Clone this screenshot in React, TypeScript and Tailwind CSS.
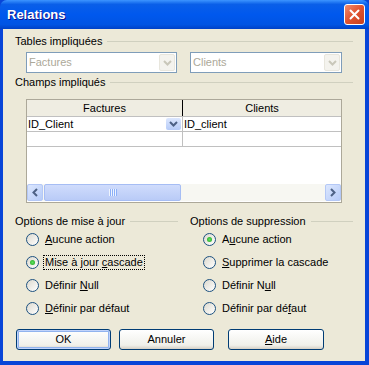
import React from "react";

const font = "font-['Liberation_Sans',Arial,sans-serif]";

function Chevron({ color, className }: { color: string; className?: string }) {
  return (
    <svg width="9" height="6" viewBox="0 0 9 6" className={className}>
      <path d="M1 1 L4.5 4.5 L8 1" fill="none" stroke={color} strokeWidth="2" />
    </svg>
  );
}

function GroupHeader({ title }: { title: string }) {
  return (
    <div className="flex h-[14px] items-center gap-[5px]">
      <span className="whitespace-nowrap leading-none">{title}</span>
      <div className="h-px flex-1 bg-[#D0D0BF]" />
    </div>
  );
}

function Combo({ value, width }: { value: string; width: string }) {
  return (
    <div className={`flex h-[21px] ${width} items-center border border-[#7F9DB9] bg-white pl-[2px] pr-px`}>
      <span className="flex-1 text-[#ACA899]">{value}</span>
      <div className="flex h-[17px] w-[16px] items-center justify-center rounded-[2px] border border-[#E8E6DD] bg-[#F4F3EE]">
        <Chevron color="#C9C7BA" />
      </div>
    </div>
  );
}

function Radio({ label, checked, focused }: { label: React.ReactNode; checked?: boolean; focused?: boolean }) {
  return (
    <div className="flex h-[23px] items-center gap-[4px]">
      <div className="flex h-[13px] w-[13px] items-center justify-center rounded-full border border-[#1C5180] bg-[linear-gradient(135deg,#DCD9CE,#FFFFFF)]">
        {checked && <div className="h-[5px] w-[5px] rounded-full bg-[radial-gradient(circle,#5EE35E,#21A121)]" />}
      </div>
      <span className={`whitespace-nowrap leading-[13px] ${focused ? "border border-dotted border-black px-px" : "border border-transparent px-px"}`}>
        {label}
      </span>
    </div>
  );
}

function Btn({ children, width, focused }: { children: React.ReactNode; width: string; focused?: boolean }) {
  return (
    <div
      className={`flex h-[21px] ${width} items-center justify-center rounded-[3px] border border-[#003C74] bg-[linear-gradient(#FFFFFF,#F0F0EA_80%,#D6D0C5)] ${
        focused ? "shadow-[inset_0_0_0_1px_#C1D3FB,inset_0_0_0_2px_#91B3EE]" : ""
      }`}
    >
      {children}
    </div>
  );
}

function ScrollBtn({ dir }: { dir: "left" | "right" }) {
  return (
    <div className="flex h-[17px] w-[16px] items-center justify-center rounded-[2px] border border-[#B4C8F6] bg-[linear-gradient(135deg,#DCE7FE,#B6CBF8)]">
      <svg width="6" height="9" viewBox="0 0 6 9">
        <path d={dir === "left" ? "M5 1 L1.5 4.5 L5 8" : "M1 1 L4.5 4.5 L1 8"} fill="none" stroke="#4D6185" strokeWidth="2" />
      </svg>
    </div>
  );
}

export default function App() {
  return (
    <div className={`${font} flex h-[365px] w-[369px] flex-col bg-[#0845D8] text-[11px] text-black`}>
      <div className="flex h-[29px] items-center justify-between rounded-t-[7px] bg-[linear-gradient(#3D95FF,#0A5FE8_15%,#0058EE_50%,#0054E3_85%,#0041C6)] pl-[7px] pr-[4px]">
        <span className="text-[13px] font-bold text-white [text-shadow:1px_1px_#0F1089]">Relations</span>
        <div className="flex h-[21px] w-[21px] items-center justify-center rounded-[3px] border border-white bg-[linear-gradient(135deg,#F08C6F,#E0522F_50%,#C8401E)]">
          <svg width="11" height="11" viewBox="0 0 11 11">
            <path d="M1.5 1.5 L9.5 9.5 M9.5 1.5 L1.5 9.5" stroke="white" strokeWidth="2" strokeLinecap="round" />
          </svg>
        </div>
      </div>

      <div className="mb-[4px] ml-[3px] mr-[4px] flex-1 bg-[#ECE9D8] px-[12px] pt-[5px]">
        <GroupHeader title="Tables impliquées" />
        <div className="ml-[11px] mt-[4px] flex gap-[13px]">
          <Combo value="Factures" width="w-[151px]" />
          <Combo value="Clients" width="w-[152px]" />
        </div>

        <div className="mt-[2px]">
          <GroupHeader title="Champs impliqués" />
        </div>

        <div className="ml-[11px] mt-[10px] flex h-[104px] w-[316px] flex-col border border-[#ACA899] bg-white">
          <div className="flex h-[17px] border-b border-[#C0C0C0] bg-[#EFEDE2]">
            <div className="flex w-[156px] items-center justify-center border-r border-black">Factures</div>
            <div className="flex flex-1 items-center justify-center">Clients</div>
          </div>
          <div className="flex h-[15px] border-b border-[#C0C0C0]">
            <div className="flex w-[156px] items-center justify-between border-r border-[#C0C0C0] pl-px pr-px">
              <span>ID_Client</span>
              <div className="flex h-[12px] w-[15px] items-center justify-center rounded-[2px] bg-[linear-gradient(#DCE7FE,#B6CBF8)]">
                <Chevron color="#4D6185" />
              </div>
            </div>
            <div className="flex flex-1 items-center pl-px">ID_client</div>
          </div>
          <div className="flex h-[15px] border-b border-[#C0C0C0]">
            <div className="w-[156px] border-r border-[#C0C0C0]" />
            <div className="flex-1" />
          </div>
          <div className="flex-1" />
          <div className="mb-[1px] flex h-[17px] bg-[#F7F7F2]">
            <ScrollBtn dir="left" />
            <div className="mx-px flex w-[137px] items-center justify-center rounded-[2px] border border-[#A6BDF4] bg-[linear-gradient(#D0DCFC,#B9CBF7)]">
              <div className="flex gap-px">
                {[0, 1, 2, 3].map((i) => (
                  <div key={i} className="h-[7px] w-px bg-[#EEF4FE] shadow-[1px_0_#8CB0F8]" />
                ))}
              </div>
            </div>
            <div className="flex-1" />
            <ScrollBtn dir="right" />
          </div>
        </div>

        <div className="mt-[11px] flex gap-[12px]">
          <div className="w-[163px]">
            <GroupHeader title="Options de mise à jour" />
            <div className="ml-[11px]">
              <Radio label={<><u>A</u>ucune action</>} />
              <Radio label={<>Mise à jour <u>c</u>ascade</>} checked focused />
              <Radio label={<>Définir <u>N</u>ull</>} />
              <Radio label={<><u>D</u>éfinir par défaut</>} />
            </div>
          </div>
          <div className="w-[163px]">
            <GroupHeader title="Options de suppression" />
            <div className="ml-[13px]">
              <Radio label={<>A<u>u</u>cune action</>} checked />
              <Radio label={<><u>S</u>upprimer la cascade</>} />
              <Radio label={<>Définir N<u>u</u>ll</>} />
              <Radio label={<>Définir par dé<u>f</u>aut</>} />
            </div>
          </div>
        </div>

        <div className="ml-[1px] mt-[9px] flex">
          <Btn width="w-[95px]" focused>OK</Btn>
          <div className="w-[8px]" />
          <Btn width="w-[95px]">Annuler</Btn>
          <div className="w-[14px]" />
          <Btn width="w-[96px]"><span><u>A</u>ide</span></Btn>
        </div>
      </div>
    </div>
  );
}
